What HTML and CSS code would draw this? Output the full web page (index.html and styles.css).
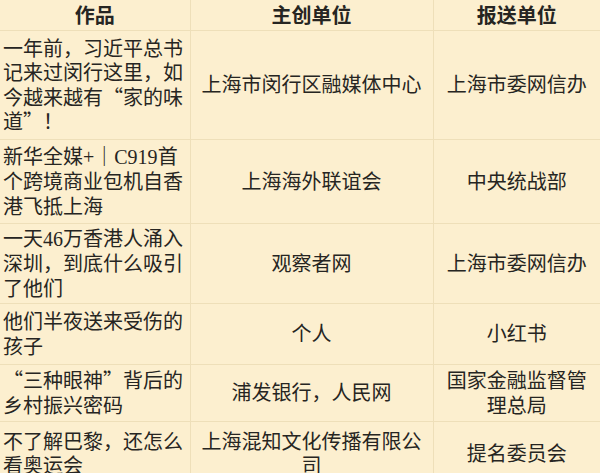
FILE: index.html
```html
<!DOCTYPE html>
<html lang="zh-CN">
<head>
<meta charset="utf-8">
<title>作品列表</title>
<link rel="stylesheet" href="styles.css">
</head>
<body>
<table class="list">
  <colgroup>
    <col class="c1">
    <col class="c2">
    <col class="c3">
  </colgroup>
  <thead>
    <tr class="rh">
      <th>作品</th>
      <th>主创单位</th>
      <th>报送单位</th>
    </tr>
  </thead>
  <tbody>
    <tr class="r1">
      <td class="work">一年前，习近平总书记来过闵行这里，如今越来越有“家的味道”！</td>
      <td>上海市闵行区融媒体中心</td>
      <td>上海市委网信办</td>
    </tr>
    <tr class="r2">
      <td class="work">新华全媒<span class="lat">+</span>｜<span class="lat">C919</span>首个跨境商业包机自香港飞抵上海</td>
      <td>上海海外联谊会</td>
      <td>中央统战部</td>
    </tr>
    <tr class="r3">
      <td class="work">一天<span class="lat">46</span>万香港人涌入深圳，到底什么吸引了他们</td>
      <td>观察者网</td>
      <td>上海市委网信办</td>
    </tr>
    <tr class="r4">
      <td class="work">他们半夜送来受伤的孩子</td>
      <td>个人</td>
      <td>小红书</td>
    </tr>
    <tr class="r5">
      <td class="work">“三种眼神”背后的乡村振兴密码</td>
      <td>浦发银行，人民网</td>
      <td>国家金融监督管理总局</td>
    </tr>
    <tr class="r6">
      <td class="work">不了解巴黎，还怎么看奥运会</td>
      <td>上海混知文化传播有限公司</td>
      <td>提名委员会</td>
    </tr>
  </tbody>
</table>
</body>
</html>
```

FILE: styles.css
```css
html, body {
  margin: 0;
  padding: 0;
  background: #fcefcf;
}

body {
  width: 600px;
  height: 473px;
  overflow: hidden;
  font-family: "Noto Sans CJK SC", "Noto Sans", sans-serif;
  color: #262522;
}

.list {
  width: 600px;
  border-collapse: collapse;
  table-layout: fixed;
  background: #fcefcf;
}

.c1 { width: 190px; }
.c2 { width: 243px; }
.c3 { width: 167px; }

.list th,
.list td {
  border: 1px solid #eedfb9;
  font-size: 20px;
  line-height: 24.5px;
  padding: 2px 4px;
  text-align: center;
  vertical-align: middle;
  font-weight: 400;
}

.list th {
  font-weight: 700;
  border-top: none;
}

.list th:first-child,
.list td:first-child {
  border-left: none;
}

.list th:last-child,
.list td:last-child {
  border-right: none;
}

.list td.work {
  text-align: left;
  padding-left: 3px;
  padding-right: 3px;
}

.lat {
  font-family: "Liberation Serif", serif;
}

.rh { height: 30px; }
.r1 { height: 109px; }
.r2 { height: 84px; }
.r3 { height: 80px; }
.r4 { height: 61px; }
.r5 { height: 57px; }
.r6 { height: 64px; }
```
